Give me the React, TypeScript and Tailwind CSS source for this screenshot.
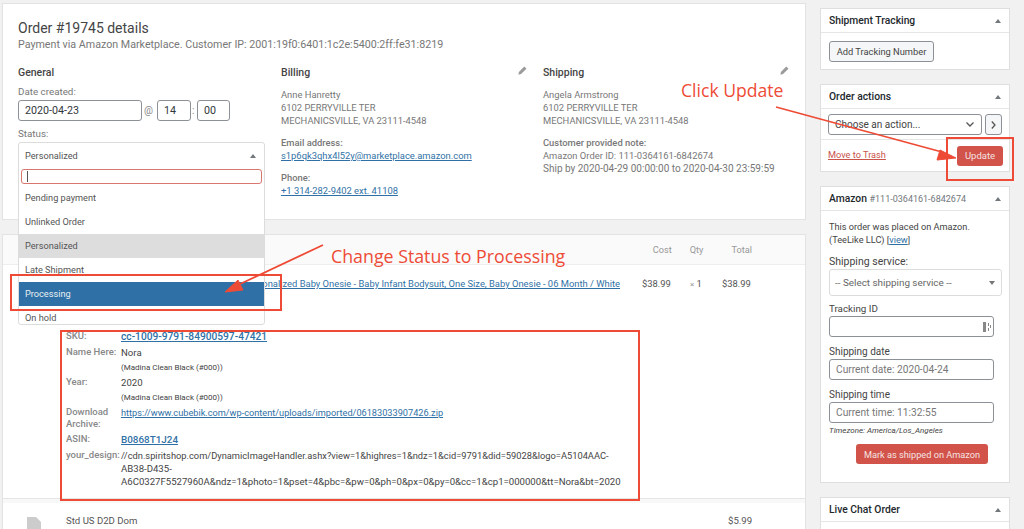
const inputCls = "h-[21px] rounded-[3px] border border-[#8c9197] bg-white pl-[6px] text-[10.7px] leading-[19px] text-[#32373c]";

function Caret() {
  return <span className="h-0 w-0 border-x-[3px] border-b-[4px] border-x-transparent border-b-[#72777c]" />;
}

function Pencil() {
  return (
    <svg width="9" height="9" viewBox="0 0 10 10" fill="#9a9a9a">
      <path d="M7 .6 9.4 3 3.4 9 .5 9.6 1 6.6Z" />
    </svg>
  );
}

function SideBox({ title, note, children }: { title: string; note?: string; children: React.ReactNode }) {
  return (
    <div className="border border-[#dfdfdf] bg-white">
      <div className="flex h-6 items-center justify-between border-b border-[#e5e5e5] pl-2 pr-2">
        <span className="text-[10.3px] font-medium text-[#23282d]">
          {title} {note && <span className="text-[9px] font-normal text-[#72777c]">{note}</span>}
        </span>
        <Caret />
      </div>
      {children}
    </div>
  );
}

function Meta({ label, children }: { label: string; children: React.ReactNode }) {
  return (
    <div className="flex">
      <div className="w-[55px] shrink-0 text-[9.5px] font-medium leading-[12px] text-[#888]">{label}</div>
      <div className="w-[510px] text-[9.6px] leading-[13px] text-[#444]">{children}</div>
    </div>
  );
}

export default function App() {
  return (
    <div className="relative flex h-[529px] w-[1024px] overflow-hidden bg-[#f1f1f1] font-['Roboto',sans-serif] text-[#555]">
      {/* main column */}
      <div className="ml-[2px] w-[804px] pt-[3px]">
        <div className="h-[217px] border border-[#e3e3e3] bg-white pl-[15px] pt-[15px]">
          <h2 className="text-[14px] leading-[18px] text-[#444]">Order #19745 details</h2>
          <p className="text-[10.7px] leading-[15px] text-[#777]">
            Payment via Amazon Marketplace. Customer IP: 2001:19f0:6401:1c2e:5400:2ff:fe31:8219
          </p>
          <div className="mt-[14px] grid grid-cols-[263px_262px_1fr]">
            <div>
              <h3 className="text-[10.5px] font-medium leading-[14px] text-[#444]">General</h3>
              <div className="mt-[5px] text-[9.8px] leading-[14px] text-[#777]">Date created:</div>
              <div className="mt-px flex items-center text-[10px] text-[#888]">
                <div className={`${inputCls} w-[124px]`}>2020-04-23</div>
                <span className="mx-[2px] w-[11px]">@</span>
                <div className={`${inputCls} w-[34px]`}>14</div>
                <span className="w-[6px] pl-[1px]">:</span>
                <div className={`${inputCls} w-[33px]`}>00</div>
              </div>
              <div className="mt-[6px] text-[9.8px] leading-[14px] text-[#777]">Status:</div>
              <div className="relative mt-px h-[26px]">
                <div className="absolute left-0 top-0 z-10 w-[247px] rounded-[3px] border border-[#dcdcdc] bg-white text-[9.2px] leading-[24px] text-[#555]">
                  <div className="flex h-[26px] items-center justify-between pl-[6px] pr-2">
                    <span>Personalized</span>
                    <Caret />
                  </div>
                  <div className="mx-[2px] flex h-[15px] items-center rounded-[3px] border border-[#d9776e] pl-[5px]">
                    <span className="h-[11px] w-px bg-[#555]" />
                  </div>
                  <div className="mt-[2px] pl-[6px]">Pending payment</div>
                  <div className="pl-[6px]">Unlinked Order</div>
                  <div className="bg-[#dddddd] pl-[6px]">Personalized</div>
                  <div className="pl-[6px]">Late Shipment</div>
                  <div className="bg-[#2f71a6] pl-[6px] text-[#e8eef3]">Processing</div>
                  <div className="h-[18px] pl-[6px]">On hold</div>
                </div>
              </div>
            </div>
            <div className="text-[9.4px] leading-[13px] text-[#777]">
              <div className="flex w-[246px] justify-between">
                <h3 className="text-[10.5px] font-medium leading-[14px] text-[#444]">Billing</h3>
                <Pencil />
              </div>
              <div className="mt-[8px]">Anne Hanretty</div>
              <div>6102 PERRYVILLE TER</div>
              <div>MECHANICSVILLE, VA 23111-4548</div>
              <div className="mt-[9px] font-medium">Email address:</div>
              <div className="text-[#2f71a6] underline">s1p6qk3qhx4l52y@marketplace.amazon.com</div>
              <div className="mt-[9px] font-medium">Phone:</div>
              <div className="text-[#2f71a6] underline">+1 314-282-9402 ext. 41108</div>
            </div>
            <div className="text-[9.4px] leading-[13px] text-[#777]">
              <div className="flex w-[246px] justify-between">
                <h3 className="text-[10.5px] font-medium leading-[14px] text-[#444]">Shipping</h3>
                <Pencil />
              </div>
              <div className="mt-[8px]">Angela Armstrong</div>
              <div>6102 PERRYVILLE TER</div>
              <div>MECHANICSVILLE, VA 23111-4548</div>
              <div className="mt-[9px] font-medium">Customer provided note:</div>
              <div>Amazon Order ID: 111-0364161-6842674</div>
              <div className="text-[10px]">Ship by 2020-04-29 00:00:00 to 2020-04-30 23:59:59</div>
            </div>
          </div>
        </div>

        <div className="mt-[14px] h-[300px] border border-[#e3e3e3] bg-white">
          <div className="flex h-[29px] items-center justify-end bg-[#fafafa] text-[9.2px] text-[#999]">
            <span className="mr-[18px]">Cost</span>
            <span className="mr-[28px]">Qty</span>
            <span className="mr-[53px]">Total</span>
          </div>
          <div className="flex h-[64px] border-t border-[#eee] pt-[12px] text-[9.4px] leading-[13px]">
            <div className="ml-[17px] mr-[22px] w-[600px] whitespace-nowrap text-right text-[#2f71a6] underline">
              Personalized Baby Onesie - Baby Infant Bodysuit, One Size, Baby Onesie - 06 Month / White
            </div>
            <span className="w-[48px]">$38.99</span>
            <span className="w-[32px]"><span className="text-[8px] text-[#999]">×</span> 1</span>
            <span>$38.99</span>
          </div>
          <div className="ml-[63px] flex h-[170px] flex-col gap-[3px] pt-[2px]">
            <Meta label="SKU:"><span className="text-[10.2px] font-medium text-[#2f71a6] underline">cc-1009-9791-84900597-47421</span></Meta>
            <Meta label="Name Here:">
              <div>Nora</div>
              <div className="mt-[3px] text-[8px] leading-[11px]">(Madina Clean Black (#000))</div>
            </Meta>
            <Meta label="Year:">
              <div>2020</div>
              <div className="mt-[3px] text-[8px] leading-[11px]">(Madina Clean Black (#000))</div>
            </Meta>
            <Meta label="Download Archive:">
              <span className="text-[9.2px] text-[#2f71a6] underline">https://www.cubebik.com/wp-content/uploads/imported/06183033907426.zip</span>
            </Meta>
            <Meta label="ASIN:"><span className="text-[9.9px] font-medium text-[#2f71a6] underline">B0868T1J24</span></Meta>
            <Meta label="your_design:">
              <span className="text-[9.3px]">//cdn.spiritshop.com/DynamicImageHandler.ashx?view=1&highres=1&ndz=1&cid=9791&did=59028&logo=A5104AAC-</span><br />
              AB38-D435-<br />
              A6C0327F5527960A&ndz=1&photo=1&pset=4&pbc=&pw=0&ph=0&px=0&py=0&cc=1&cp1=000000&tt=Nora&bt=2020
            </Meta>
          </div>
          <div className="h-[5px] border-t border-[#e5e5e5] bg-[#f8f8f8]" />
          <div className="flex items-start pt-[14px] text-[9.6px] leading-[8px]">
            <svg className="ml-[24px]" width="14" height="16" viewBox="0 0 14 16" fill="#ccc">
              <path d="M0 0h9l5 5v11H0Z" />
            </svg>
            <span className="ml-[25px] w-[662px]">Std US D2D Dom</span>
            <span>$5.99</span>
          </div>
        </div>
      </div>

      {/* sidebar */}
      <div className="ml-[14px] flex w-[190px] flex-col gap-[14px] pt-[8px]">
        <SideBox title="Shipment Tracking">
          <div className="h-[36px] pl-2 pt-2">
            <div className="flex h-[21px] w-[105px] items-center justify-center whitespace-nowrap rounded-[3px] border border-[#8c9197] bg-[#f5f6f7] text-[9.3px] text-[#444]">
              Add Tracking Number
            </div>
          </div>
        </SideBox>
        <SideBox title="Order actions">
          <div className="flex h-[31px] gap-[3px] border-b border-[#e5e5e5] pl-[7px] pt-[5px]">
            <div className="flex h-[21px] w-[154px] items-center justify-between rounded-[3px] border border-[#8c9197] pl-[6px] pr-[7px] text-[10px] text-[#444]">
              Choose an action...
              <svg width="8" height="5" viewBox="0 0 8 5" fill="none" stroke="#555" strokeWidth="1.3"><path d="M.5.5 4 4 7.5.5" /></svg>
            </div>
            <div className="flex h-[21px] w-[17px] items-center justify-center rounded-[3px] border border-[#8c9197] bg-[#f5f6f7]">
              <svg width="5" height="8" viewBox="0 0 5 8" fill="none" stroke="#555" strokeWidth="1.3"><path d="M.8.5 4 4 .8 7.5" /></svg>
            </div>
          </div>
          <div className="flex h-[31px] items-start justify-between pl-[7px] pr-[6px] pt-[6px]">
            <span className="pt-[2px] text-[9.2px] text-[#c9524a] underline">Move to Trash</span>
            <div className="flex h-5 w-[46px] items-center justify-center rounded-[3px] bg-[#d1534a] text-[9.5px] text-[#f6e3e1]">Update</div>
          </div>
        </SideBox>
        <SideBox title="Amazon" note="#111-0364161-6842674">
          <div className="h-[271px] px-2 pt-[9px] text-[10px] leading-[13px] text-[#444]">
            <p className="text-[9.2px]">This order was placed on Amazon.<br />(TeeLike LLC) [<span className="text-[#2f71a6] underline">view</span>]</p>
            <div className="mt-[9px] text-[10.5px]">Shipping service:</div>
            <div className="mt-[1px] flex h-[27px] w-[173px] items-center justify-between rounded-[3px] border border-[#dcdcdc] pl-[5px] pr-[6px] text-[9.9px] text-[#666]">
              -- Select shipping service --
              <span className="h-0 w-0 border-x-[3px] border-t-[4px] border-x-transparent border-t-[#777]" />
            </div>
            <div className="mt-[6px] text-[9.8px]">Tracking ID</div>
            <div className="mt-[1px] flex h-[21px] w-[165px] items-center justify-end rounded-[3px] border border-[#8c9197] pr-[2px]">
              <svg width="8" height="10" viewBox="0 0 8 10" fill="#888"><path d="M0 0h3v10H0ZM5 1h1v3H5ZM5 6h1v3H5ZM7 3h1v3H7Z" /></svg>
            </div>
            <div className="mt-[8px]">Shipping date</div>
            <div className="mt-[1px] flex h-[21px] w-[165px] items-center rounded-[3px] border border-[#8c9197] pl-[6px] text-[10.2px] text-[#777]">Current date: 2020-04-24</div>
            <div className="mt-[8px]">Shipping time</div>
            <div className="mt-[1px] flex h-[21px] w-[165px] items-center rounded-[3px] border border-[#8c9197] pl-[6px] text-[10.2px] text-[#777]">Current time: 11:32:55</div>
            <div className="mt-[1px] text-[8px] italic">Timezone: America/Los_Angeles</div>
            <div className="ml-[27px] mt-[7px] flex h-5 w-[132px] items-center justify-center whitespace-nowrap rounded-[3px] bg-[#d1534a] text-[9.2px] text-[#f6e3e1]">Mark as shipped on Amazon</div>
          </div>
        </SideBox>
        <SideBox title="Live Chat Order">
          <div className="h-4" />
        </SideBox>
      </div>

      {/* annotations drawn over the page */}
      <div className="absolute left-[681px] top-[78px] z-20 font-['Open_Sans',sans-serif] text-[17.6px] leading-[24px] text-[#ee4b36]">Click Update</div>
      <div className="absolute left-[331px] top-[245px] z-20 font-['Open_Sans',sans-serif] text-[17.8px] leading-[23px] text-[#ee4b36]">Change Status to Processing</div>
      <div className="absolute left-[10px] top-[274px] z-20 h-[37px] w-[272px] border-2 border-[#ee4b36]" />
      <div className="absolute left-[60px] top-[330px] z-20 h-[171px] w-[580px] border-2 border-[#ee4b36]" />
      <div className="absolute left-[946px] top-[137px] z-20 h-[44px] w-[68px] border-2 border-[#ee4b36]" />
      <svg className="absolute left-0 top-0 z-20" width="1024" height="529" fill="#ee4b36" stroke="#ee4b36">
        <path d="M776 107 942 152" strokeWidth="1.8" />
        <path d="M956 158 937 160 940 150Z" />
        <path d="M323 245 238 285" strokeWidth="1.8" />
        <path d="M225 292 238 280 243 290Z" />
      </svg>
    </div>
  );
}
